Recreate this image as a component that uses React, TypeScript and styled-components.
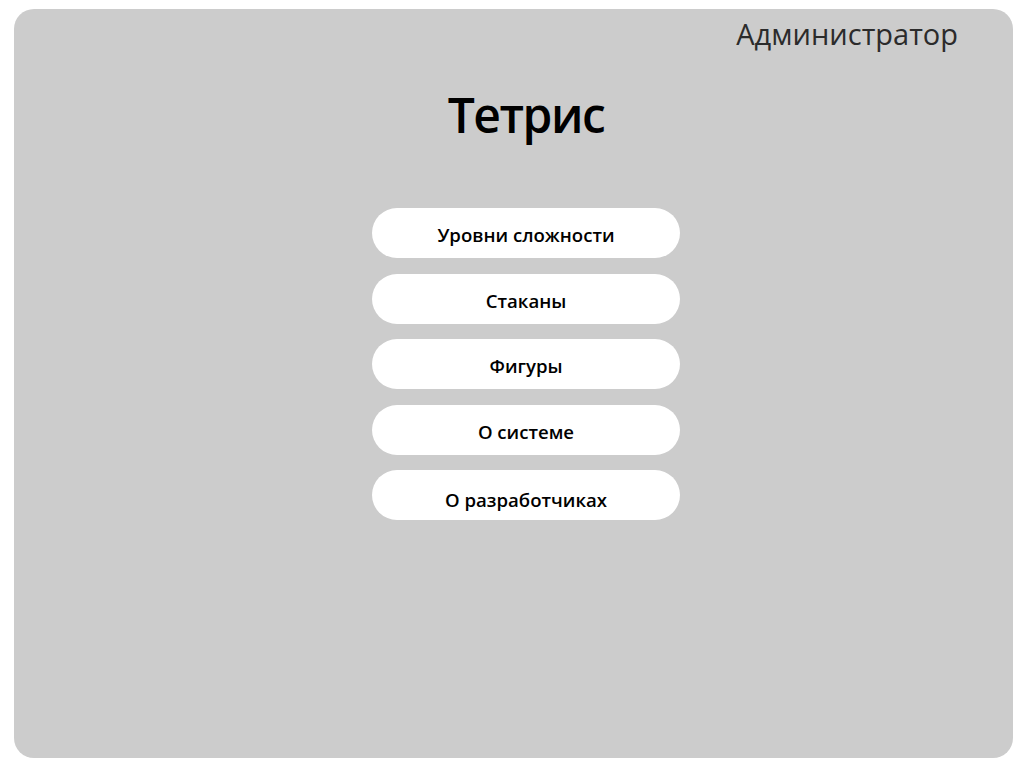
import React from "react";
import styled, { createGlobalStyle } from "styled-components";

const Global = createGlobalStyle`
  html, body { margin: 0; padding: 0; background: #ffffff; }
  body { font-family: "Open Sans", "Noto Sans", sans-serif; }
`;

const Page = styled.div`
  padding: 9px 14px 9px 14px;
  box-sizing: border-box;
  width: 1027px;
  height: 767px;
`;

const Panel = styled.div`
  background: #cccccc;
  border-radius: 20px;
  width: 999px;
  height: 749px;
  box-sizing: border-box;
  padding-left: 25px;
  display: flex;
  flex-direction: column;
  align-items: center;
`;

const TopBar = styled.div`
  align-self: stretch;
  display: flex;
  justify-content: flex-end;
  padding: 6px 55px 0 0;
  height: 46px;
  box-sizing: border-box;
`;

const Role = styled.div`
  font-size: 29px;
  line-height: 38px;
  color: #2b2b2b;
  font-weight: 400;
`;

const Title = styled.h1`
  margin: 25px 0 0 0;
  font-size: 48px;
  line-height: 70px;
  font-weight: 600;
  letter-spacing: -1.5px;
  color: #000;
`;

const Menu = styled.div`
  margin-top: 58px;
  display: flex;
  flex-direction: column;
  gap: 15.5px;
`;

const MenuButton = styled.button<{ $offset?: number }>`
  width: 308px;
  height: 50px;
  border: none;
  border-radius: 25px;
  background: #ffffff;
  font-family: "Open Sans", "Noto Sans", sans-serif;
  font-size: 18.6px;
  font-weight: 600;
  color: #000;
  padding: ${(p) => p.$offset ?? 3}px 0 0 0;
  cursor: pointer;
`;

const items: { label: string; offset?: number }[] = [
  { label: "Уровни сложности" },
  { label: "Стаканы" },
  { label: "Фигуры" },
  { label: "О системе" },
  { label: "О разработчиках", offset: 9 },
];

export default function App() {
  return (
    <>
      <Global />
      <Page>
        <Panel>
          <TopBar>
            <Role>Администратор</Role>
          </TopBar>
          <Title>Тетрис</Title>
          <Menu>
            {items.map((it) => (
              <MenuButton key={it.label} $offset={it.offset}>
                {it.label}
              </MenuButton>
            ))}
          </Menu>
        </Panel>
      </Page>
    </>
  );
}
